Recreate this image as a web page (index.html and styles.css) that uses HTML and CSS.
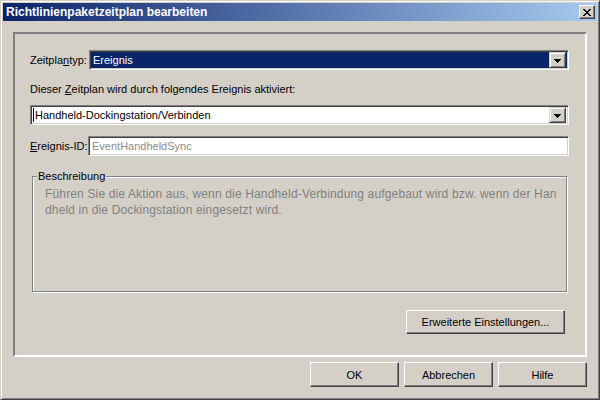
FILE: index.html
```html
<!DOCTYPE html>
<html>
<head>
<meta charset="utf-8">
<link rel="stylesheet" href="styles.css">
</head>
<body>
<div class="window">
  <div class="titlebar">
    <span class="title">Richtlinienpaketzeitplan bearbeiten</span>
    <span class="close"><svg width="8" height="7" viewBox="0 0 8 7" shape-rendering="crispEdges"><path d="M0 0h2v1H0z M6 0h2v1H6z M1 1h2v1H1z M5 1h2v1H5z M2 2h4v1H2z M3 3h2v1H3z M2 4h4v1H2z M1 5h2v1H1z M5 5h2v1H5z M0 6h2v1H0z M6 6h2v1H6z"/></svg></span>
  </div>
  <div class="client">
    <div class="panel">
      <div class="row row-type">
        <span class="lbl lbl-type">Zeitpla<u>n</u>typ:</span>
        <div class="combo combo-focused">
          <span class="val">Ereignis</span>
          <span class="dd"><svg width="7" height="4" viewBox="0 0 7 4" shape-rendering="crispEdges"><path d="M0 0h7v1H0z M1 1h5v1H1z M2 2h3v1H2z M3 3h1v1H3z"/></svg></span>
        </div>
      </div>
      <div class="caption">Dieser <u>Z</u>eitplan wird durch folgendes Ereignis aktiviert:</div>
      <div class="combo combo-event">
        <span class="val"><span class="caret"></span>Handheld-Dockingstation/Verbinden</span>
        <span class="dd"><svg width="7" height="4" viewBox="0 0 7 4" shape-rendering="crispEdges"><path d="M0 0h7v1H0z M1 1h5v1H1z M2 2h3v1H2z M3 3h1v1H3z"/></svg></span>
      </div>
      <div class="row row-id">
        <span class="lbl lbl-id"><u>E</u>reignis-ID:</span>
        <div class="field field-disabled">EventHandheldSync</div>
      </div>
      <div class="group">
        <span class="legend">Beschreibung</span>
        <p class="desc">Führen Sie die Aktion aus, wenn die Handheld-Verbindung aufgebaut wird bzw. wenn der Han<br>dheld in die Dockingstation eingesetzt wird.</p>
      </div>
      <div class="adv-row">
        <button class="btn btn-adv">Erweiterte Einstellun<u>g</u>en...</button>
      </div>
    </div>
    <div class="buttons">
      <button class="btn btn-main">OK</button>
      <button class="btn btn-main">Abbrechen</button>
      <button class="btn btn-main">Hilfe</button>
    </div>
  </div>
</div>
</body>
</html>
```

FILE: styles.css
```css
* { box-sizing: border-box; }
html, body { margin: 0; padding: 0; }
body {
  width: 600px;
  height: 400px;
  overflow: hidden;
  font-family: "Liberation Sans", Arial, sans-serif;
  font-size: 11px;
  color: #000;
  background: #d4d0c8;
}
.window {
  width: 600px;
  height: 400px;
  background: #d4d0c8;
  border-top: 1px solid #d4d0c8;
  border-left: 1px solid #d4d0c8;
  border-right: 1px solid #404040;
  border-bottom: 1px solid #404040;
  box-shadow: inset 1px 1px #fff, inset -1px -1px #808080;
  padding: 2px;
  display: flex;
  flex-direction: column;
}
.titlebar {
  height: 18px;
  flex: none;
  background: linear-gradient(to right, #0a246a, #a6caf0);
  display: flex;
  align-items: center;
  justify-content: space-between;
  padding: 0 2px 0 2px;
}
.title {
  color: #fff;
  font-weight: bold;
  font-size: 12px;
  padding-left: 1px;
}
.close {
  width: 16px;
  height: 14px;
  background: #d4d0c8;
  border-top: 1px solid #fff;
  border-left: 1px solid #fff;
  border-right: 1px solid #404040;
  border-bottom: 1px solid #404040;
  box-shadow: inset -1px -1px #808080;
  display: flex;
  align-items: center;
  justify-content: center;
  padding-right: 1px;
}
.close svg { display: block; fill: #000; }
.client {
  flex: 1;
  display: flex;
  flex-direction: column;
  padding: 11px 10px 10px 10px;
}
.panel {
  height: 325px;
  border-top: 2px solid #808080;
  border-left: 2px solid #808080;
  border-right: 2px solid #fff;
  border-bottom: 2px solid #fff;
  padding: 16px 16px 0 15px;
  display: flex;
  flex-direction: column;
}
.row { display: flex; align-items: center; }
.lbl { flex: none; }
.lbl-type { width: 59px; }
.lbl-id { width: 58px; }
.combo, .field {
  height: 20px;
  background: #fff;
  border-top: 1px solid #808080;
  border-left: 1px solid #808080;
  border-right: 1px solid #fff;
  border-bottom: 1px solid #fff;
  box-shadow: inset 1px 1px #404040, inset -1px -1px #d4d0c8;
  display: flex;
  align-items: center;
}
.combo { flex: 1; padding: 2px; }
.combo-focused { background: #0a246a; color: #fff; }
.combo .val { flex: 1; padding-left: 1px; display: flex; align-items: center; white-space: nowrap; }
.caret { width: 1px; height: 14px; background: #000; margin-right: 1px; margin-left: -1px; }
.dd {
  width: 17px;
  height: 16px;
  flex: none;
  background: #d4d0c8;
  border-top: 1px solid #d4d0c8;
  border-left: 1px solid #d4d0c8;
  border-right: 1px solid #404040;
  border-bottom: 1px solid #404040;
  box-shadow: inset 1px 1px #fff, inset -1px -1px #808080;
  display: flex;
  align-items: center;
  justify-content: center;
  padding-top: 2px;
}
.dd svg { display: block; fill: #000; }
.caption { margin-top: 13px; line-height: 13px; }
.combo-event { flex: none; margin-top: 9px; }
.row-id { margin-top: 11px; }
.field { flex: 1; padding-left: 3px; }
.field-disabled { color: #8c8c8c; }
.group {
  position: relative;
  margin: 20px 2px 0 2px;
  height: 116px;
  border: 1px solid #808080;
  box-shadow: inset 1px 1px #fff, 1px 1px #fff;
  padding: 9px 10px 0 12px;
}
.legend {
  position: absolute;
  top: -7px;
  left: 4px;
  background: #d4d0c8;
  padding: 0 1px;
  line-height: 13px;
}
.desc {
  margin: 0;
  font-size: 12px;
  line-height: 16px;
  color: #808080;
  white-space: nowrap;
  letter-spacing: 0.15px;
}
.adv-row {
  display: flex;
  justify-content: flex-end;
  margin-top: 18px;
  padding-right: 4px;
}
.btn {
  font-family: "Liberation Sans", Arial, sans-serif;
  font-size: 11px;
  color: #000;
  background: #d4d0c8;
  border-top: 1px solid #fff;
  border-left: 1px solid #fff;
  border-right: 1px solid #404040;
  border-bottom: 1px solid #404040;
  box-shadow: inset -1px -1px #808080;
  padding: 0;
  margin: 0;
  border-radius: 0;
}
.btn-adv { width: 159px; height: 24px; }
.buttons {
  display: flex;
  justify-content: flex-end;
  gap: 5px;
  margin-top: 5px;
}
.btn-main { width: 89px; height: 25px; }
```
